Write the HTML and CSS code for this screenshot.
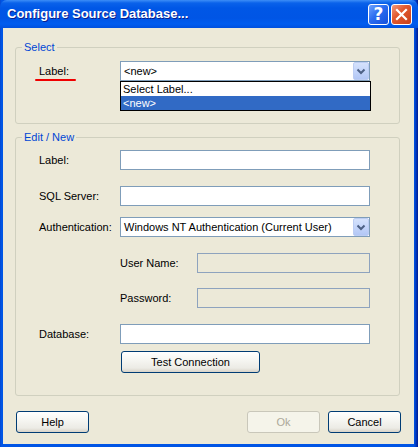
FILE: index.html
```html
<!DOCTYPE html>
<html>
<head>
<meta charset="utf-8">
<title>Configure Source Database</title>
<link rel="stylesheet" href="styles.css">
</head>
<body>
<div class="window">
  <div class="titlebar">
    <span class="title">Configure Source Database...</span>
    <div class="title-buttons">
      <span class="tbtn tbtn-help">?</span>
      <span class="tbtn tbtn-close">
        <svg width="21" height="21" viewBox="0 0 21 21"><path d="M6 6 L15 15 M15 6 L6 15" stroke="#fff" stroke-width="2.2" stroke-linecap="square"/></svg>
      </span>
    </div>
  </div>
  <div class="client">
    <fieldset class="group group-select">
      <legend>Select</legend>
      <div class="group-body select-body">
        <div class="row">
          <span class="lbl lbl-marked">Label:</span>
          <div class="combo">
            <span class="combo-text">&lt;new&gt;</span>
            <span class="combo-btn"><svg width="16" height="18" viewBox="0 0 16 18"><path d="M4.5 7.5 L8 11 L11.5 7.5" fill="none" stroke="#4D6185" stroke-width="2"/></svg></span>
            <ul class="dropdown">
              <li class="dd-item">Select Label...</li>
              <li class="dd-item dd-selected">&lt;new&gt;</li>
            </ul>
          </div>
        </div>
      </div>
    </fieldset>
    <fieldset class="group group-edit">
      <legend>Edit / New</legend>
      <div class="group-body edit-body">
        <div class="row">
          <span class="lbl">Label:</span>
          <span class="input"></span>
        </div>
        <div class="row gap16">
          <span class="lbl">SQL Server:</span>
          <span class="input"></span>
        </div>
        <div class="row gap11">
          <span class="lbl">Authentication:</span>
          <div class="combo">
            <span class="combo-text">Windows NT Authentication (Current User)</span>
            <span class="combo-btn"><svg width="16" height="18" viewBox="0 0 16 18"><path d="M4.5 7.5 L8 11 L11.5 7.5" fill="none" stroke="#4D6185" stroke-width="2"/></svg></span>
          </div>
        </div>
        <div class="row row-indent gap16">
          <span class="lbl lbl-short">User Name:</span>
          <span class="input input-disabled"></span>
        </div>
        <div class="row row-indent gap15">
          <span class="lbl lbl-short">Password:</span>
          <span class="input input-disabled"></span>
        </div>
        <div class="row gap16">
          <span class="lbl">Database:</span>
          <span class="input"></span>
        </div>
        <div class="row row-btn gap7">
          <button class="btn btn-test">Test Connection</button>
        </div>
      </div>
    </fieldset>
    <div class="footer">
      <button class="btn">Help</button>
      <span class="spacer"></span>
      <button class="btn" disabled>Ok</button>
      <button class="btn">Cancel</button>
    </div>
  </div>
</div>
</body>
</html>
```
FILE: styles.css
```css
html, body {
  margin: 0;
  padding: 0;
  background: #0054E3;
}
body {
  font-family: "Liberation Sans", Arial, sans-serif;
  font-size: 11px;
  color: #000;
}
.window {
  width: 418px;
  height: 447px;
  box-sizing: border-box;
  display: flex;
  flex-direction: column;
  background: linear-gradient(to right, #0842C8 0, #0055E5 1px, #0055E5 414px, #0038C0 416px, #001B8F 418px);
  padding-bottom: 3px;
}
.titlebar {
  height: 28px;
  flex: none;
  display: flex;
  align-items: center;
  border-radius: 7px 7px 0 0;
  background: linear-gradient(to bottom, #3D8EF7 0, #0A62EA 3px, #0057E6 8px, #0055E5 18px, #005CEF 24px, #0050DE 28px);
}
.title {
  flex: 1;
  padding-left: 7px;
  padding-bottom: 1px;
  color: #fff;
  font-weight: bold;
  font-size: 13px;
  letter-spacing: 0;
  text-shadow: 1px 1px 0 #0A1E8C;
}
.title-buttons {
  display: flex;
  gap: 2px;
  padding-right: 6px;
}
.tbtn {
  width: 21px;
  height: 21px;
  box-sizing: border-box;
  border: 1px solid #fff;
  border-radius: 3px;
  display: flex;
  align-items: center;
  justify-content: center;
  color: #fff;
}
.tbtn svg { display: block; margin: -1px; }
.tbtn-help {
  background: linear-gradient(135deg, #6EA3FF 0, #2A6CF0 45%, #1450DC 100%);
  font: bold 17px "DejaVu Sans", sans-serif;
  line-height: 19px;
}
.tbtn-close {
  background: linear-gradient(135deg, #F19A7E 0, #E2592F 40%, #C8401A 100%);
}
.client {
  flex: 1;
  margin: 0 4px 0 3px;
  background: #ECE9D8;
  display: flex;
  flex-direction: column;
}
.group {
  margin: 0 14px 0 12px;
  padding: 0;
  border: 1px solid #D0D0BF;
  border-radius: 3px;
  min-width: 0;
}
.group legend {
  margin-left: 6px;
  padding: 0 2px;
  line-height: 14px;
  height: 14px;
  color: #0046D5;
}
.group-select { margin-top: 12px; }
.group-edit { margin-top: 6px; }
.group-body {
  padding-left: 23px;
}
.select-body {
  padding-top: 7px;
  padding-bottom: 42px;
}
.edit-body {
  padding-top: 6px;
  padding-bottom: 22px;
}
.row {
  display: flex;
  align-items: center;
  height: 20px;
}
.gap16 { margin-top: 16px; }
.gap15 { margin-top: 15px; }
.gap11 { margin-top: 11px; }
.gap7 { margin-top: 7px; }
.row-indent { padding-left: 81px; }
.row-btn { height: 22px; padding-left: 82px; }
.lbl {
  width: 81px;
  flex: none;
  white-space: nowrap;
}
.lbl-short { width: 77px; }
.lbl-marked { position: relative; }
.lbl-marked::after {
  content: "";
  position: absolute;
  left: -4px;
  top: 14px;
  width: 41px;
  height: 2px;
  border-radius: 1px;
  background: #F00000;
}
.input {
  width: 250px;
  height: 20px;
  box-sizing: border-box;
  border: 1px solid #7F9DB9;
  background: #fff;
}
.input-disabled {
  width: 173px;
  background: #ECE9D8;
  border-color: #8EA3BE;
}
.combo {
  position: relative;
  width: 250px;
  height: 20px;
  box-sizing: border-box;
  border: 1px solid #7F9DB9;
  background: #fff;
  display: flex;
  align-items: center;
}
.combo-text {
  flex: 1;
  padding-left: 3px;
  white-space: nowrap;
  overflow: hidden;
}
.combo-btn {
  width: 16px;
  height: 18px;
  flex: none;
  box-sizing: border-box;
  border-radius: 2px;
  border: 1px solid #BCCDF3;
  background: linear-gradient(to bottom, #D5E2FC 0, #C4D5FA 50%, #B3C7F5 100%);
}
.combo-btn svg { display: block; margin: -1px; }
.dropdown {
  position: absolute;
  left: -1px;
  top: 19px;
  width: 251px;
  box-sizing: border-box;
  margin: 0;
  padding: 0;
  list-style: none;
  border: 1px solid #000;
  background: #fff;
}
.dd-item {
  height: 14px;
  line-height: 14px;
  padding-left: 2px;
}
.dd-selected {
  background: #316AC5;
  color: #fff;
}
.btn {
  height: 22px;
  width: 73px;
  box-sizing: border-box;
  border: 1px solid #003C74;
  border-radius: 3px;
  padding: 0;
  background: linear-gradient(to bottom, #FFFFFF 0, #F6F6F2 40%, #ECEBE5 80%, #D8D3C8 100%);
  font-family: "Liberation Sans", Arial, sans-serif;
  font-size: 11px;
  color: #000;
}
.btn-test { width: 139px; }
.btn:disabled {
  border-color: #C9C7BA;
  background: #F5F4EA;
  color: #ACA899;
}
.footer {
  display: flex;
  gap: 8px;
  margin: 15px 13px 11px 13px;
}
.spacer { flex: 1; }
```
